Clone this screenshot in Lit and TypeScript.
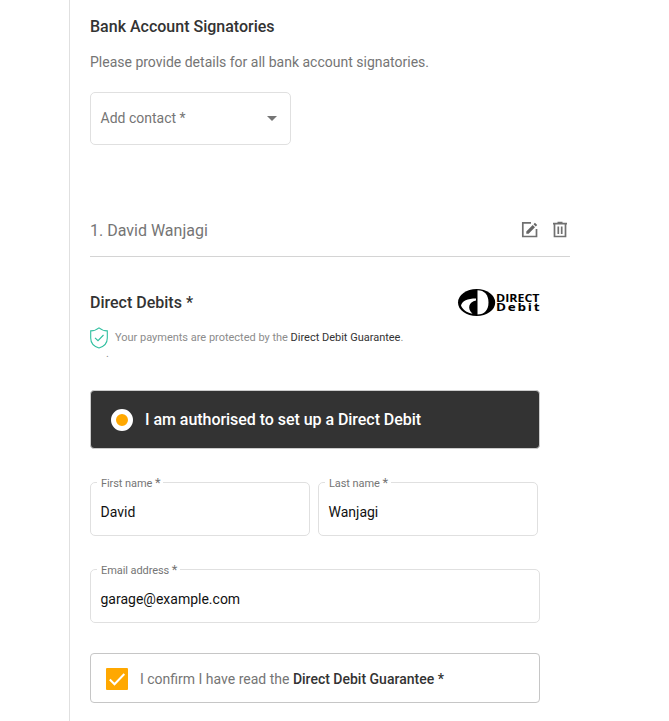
import { LitElement, html, css } from "lit";
import { customElement, property } from "lit/decorators.js";

@customElement("outlined-field")
class OutlinedField extends LitElement {
  @property() label = "";
  @property() value = "";

  static styles = css`
    :host { display: block; }
    .box {
      box-sizing: border-box;
      height: 56px;
      margin: 0;
      padding: 0 10px 0 6px;
      border: 1px solid #e0e0e0;
      border-radius: 5px;
      min-width: 0;
    }
    .label {
      height: 5px;
      line-height: 5px;
      padding: 0 3px 0 4px;
      font-size: 11px;
      letter-spacing: -0.08px;
      color: #757575;
      white-space: pre;
    }
    .star { font-size: 13px; }
    .value {
      margin: 19px 4px 0 3.5px;
      font-size: 14px;
      line-height: 16px;
      color: #111;
    }
  `;

  render() {
    return html`<fieldset class="box">
      <legend class="label">${this.label} <span class="star">*</span></legend>
      <div class="value">${this.value}</div>
    </fieldset>`;
  }
}

@customElement("app-root")
class AppRoot extends LitElement {
  static styles = css`
    :host {
      display: block;
      box-sizing: border-box;
      height: 721px;
      margin-left: 69px;
      padding: 17px 0 0 20px;
      border-left: 1px solid #e0e0e0;
      background: #fff;
      color: #757575;
      font-family: Roboto, sans-serif;
      font-size: 14px;
      overflow: hidden;
    }
    svg { display: block; }
    h2 {
      margin: 0;
      font-size: 16px;
      line-height: 20px;
      font-weight: 500;
      color: #333;
    }
    .intro { margin: 16px 0 0; line-height: 18px; }
    .select {
      box-sizing: border-box;
      display: flex;
      align-items: center;
      justify-content: space-between;
      width: 201px;
      height: 53px;
      margin-top: 21px;
      padding: 0 13px 1px 9.5px;
      border: 1px solid #e0e0e0;
      border-radius: 5px;
    }
    .contact {
      box-sizing: border-box;
      display: flex;
      align-items: center;
      width: 480px;
      height: 54px;
      margin-top: 58px;
      border-bottom: 1px solid #d4d4d4;
    }
    .name { flex: 1; font-size: 16px; padding-top: 2px; }
    .actions { display: flex; gap: 12px; margin-right: 1px; }
    .debits {
      display: flex;
      justify-content: space-between;
      align-items: center;
      width: 450px;
      height: 28px;
      margin-top: 31px;
    }
    .debits h2 { padding-top: 2px; }
    .notice {
      display: flex;
      margin-top: 11px;
      height: 36px;
      font-size: 11px;
      line-height: 22px;
      color: #8c8c8c;
      letter-spacing: -0.01px;
    }
    .shield { display: flex; flex-direction: column; width: 25px; }
    .dot { line-height: 8px; padding: 1px 0 0 16px; }
    .dark { color: #333; }
    .banner {
      box-sizing: border-box;
      display: flex;
      align-items: center;
      width: 450px;
      height: 59px;
      margin-top: 27px;
      padding-left: 20px;
      border: 1px solid #ccc;
      border-radius: 4px;
      background: #333;
      color: #fff;
      font-size: 16px;
      font-weight: 500;
      letter-spacing: -0.045px;
    }
    .radio {
      box-sizing: border-box;
      width: 22px;
      height: 22px;
      margin-right: 12px;
      border: 5px solid #fff;
      border-radius: 50%;
      background: #ffa800;
    }
    .row { display: grid; grid-template-columns: 220px 220px; gap: 8px; margin-top: 31px; }
    .email { width: 450px; margin-top: 31px; }
    .confirm {
      box-sizing: border-box;
      display: flex;
      align-items: center;
      width: 450px;
      height: 50px;
      margin-top: 30px;
      padding: 1px 0 0 15px;
      border: 1px solid #c6c6c6;
      border-radius: 4px;
    }
    .check {
      width: 22px;
      height: 22px;
      margin-right: 12px;
      border-radius: 1px;
      background: #ffa800;
    }
    .strong { font-weight: 500; color: #333; }
    .mark { font-family: "Open Sans", sans-serif; font-weight: 700; font-size: 10.4px; }
  `;

  render() {
    return html`
      <h2>Bank Account Signatories</h2>
      <p class="intro">Please provide details for all bank account signatories.</p>
      <div class="select">
        <span>Add contact *</span>
        <svg width="10" height="5" viewBox="0 0 10 5"><path d="M0 0H10L5 5Z" fill="#757575" /></svg>
      </div>
      <div class="contact">
        <span class="name">1. David Wanjagi</span>
        <div class="actions">
          <svg width="18" height="18" viewBox="0 0 18 18" fill="none" stroke="#707070" stroke-width="1.7">
            <path d="M10 1.800H1.800V15.500H15.500V8" />
            <path d="M5.300 12.700V10.400L11.700 4L14 6.300L7.600 12.700ZM12.500 3.200L13.900 1.800L16.200 4.100L14.800 5.500Z" fill="#666" stroke="none" />
          </svg>
          <svg width="18" height="18" viewBox="0 0 18 18" fill="none" stroke="#707070" stroke-width="1.7">
            <path d="M2 2.700H16M6.500 1.500H11.500M3.500 3V15.500H14.500V3M7.300 5.500V13M10.700 5.500V13" />
          </svg>
        </div>
      </div>
      <div class="debits">
        <h2>Direct Debits *</h2>
        <svg width="83" height="28" viewBox="0 0 83 28">
          <ellipse cx="19.600" cy="14.500" rx="18.600" ry="13.500" />
          <path d="M20.500 2.300C27.500 2.300 31.500 7 31.500 14.500C31.500 22 27.500 26.500 20.500 26.500Z" fill="#fff" />
          <path d="M19 10.500C10.500 10.500 5 13 4 17.500C5.500 21.500 9.500 24.700 15.500 25.800C10 20.500 11.500 14 19 12.500Z" fill="#fff" />
          <text class="mark" x="39" y="13.900" textLength="43.500" lengthAdjust="spacingAndGlyphs">DIRECT</text>
          <text class="mark" transform="translate(39 23) scale(1.3 1)" textLength="33.500">Debit</text>
        </svg>
      </div>
      <div class="notice">
        <div class="shield">
          <svg width="18" height="22" viewBox="0 0 18 22" fill="none" stroke="#2fbf9f" stroke-width="1.1">
            <path d="M9 .9C6.700 2.900 3.800 3.900.7 3.900V11C.7 16 4 19.500 9 21C14 19.500 17.300 16 17.300 11V3.900C14.200 3.900 11.300 2.900 9 .9Z" />
            <path d="M5 10.800L8 13.700L13.500 8" />
          </svg>
          <span class="dot">.</span>
        </div>
        <span>Your payments are protected by the <span class="dark">Direct Debit Guarantee</span>.</span>
      </div>
      <div class="banner"><span class="radio"></span>I am authorised to set up a Direct Debit</div>
      <div class="row">
        <outlined-field label="First name" value="David"></outlined-field>
        <outlined-field label="Last name" value="Wanjagi"></outlined-field>
      </div>
      <outlined-field class="email" label="Email address" value="garage@example.com"></outlined-field>
      <div class="confirm">
        <svg class="check" viewBox="0 0 22 22"><path d="M3.800 11.500L8.500 16.300L18.300 6" fill="none" stroke="#fff" stroke-width="2" /></svg>
        <span>I confirm I have read the <span class="strong">Direct Debit Guarantee *</span></span>
      </div>
    `;
  }
}
